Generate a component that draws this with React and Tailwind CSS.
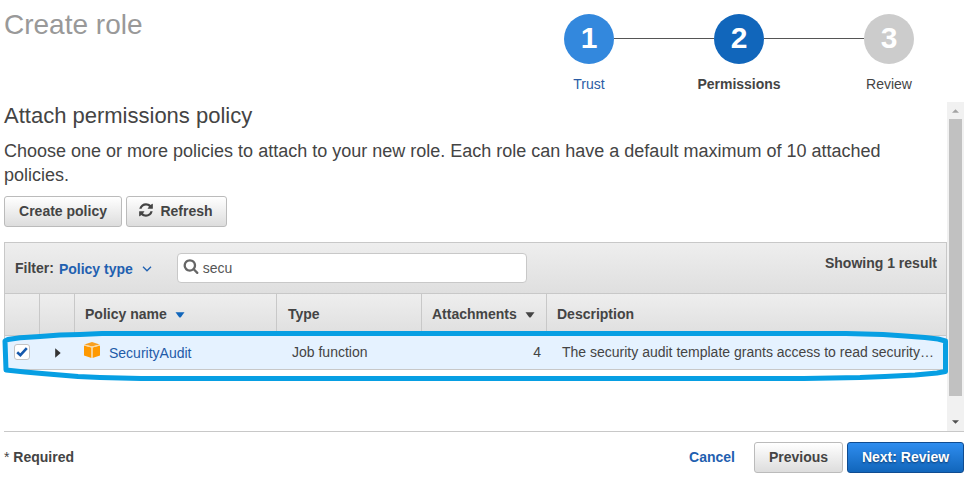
function RefreshIcon() {
  return (
    <svg viewBox="0 0 1792 1792" className="mb-px h-4 w-4 fill-[#444]">
      <path d="M1639 1056q0 5-1 7-64 268-268 434.5t-478 166.5q-146 0-282.5-55t-243.5-157l-129 129q-19 19-45 19t-45-19-19-45v-448q0-26 19-45t45-19h448q26 0 45 19t19 45-19 45l-137 137q71 66 161 102t187 36q134 0 250-65t186-179q11-17 53-117 8-23 30-23h192q13 0 22.5 9.5t9.5 22.5zm25-800v448q0 26-19 45t-45 19h-448q-26 0-45-19t-19-45 19-45l138-138q-148-137-349-137-134 0-250 65t-186 179q-11 17-53 117-8 23-30 23h-199q-13 0-22.5-9.5t-9.5-22.5v-7q65-268 270-434.5t480-166.5q146 0 284 55.5t245 156.5l130-129q19-19 45-19t45 19 19 45z" />
    </svg>
  );
}

function SearchIcon() {
  return (
    <svg viewBox="0 0 1792 1792" className="h-4 w-4 fill-[#666]">
      <path d="M1216 832q0-185-131.5-316.5t-316.5-131.5-316.5 131.5-131.5 316.5 131.5 316.5 316.5 131.5 316.5-131.5 131.5-316.5zm512 832q0 52-38 90t-90 38q-54 0-90-38l-343-342q-179 124-399 124-143 0-273.5-55.5t-225-150-150-225-55.5-273.5 55.5-273.5 150-225 225-150 273.5-55.5 273.5 55.5 225 150 150 225 55.5 273.5q0 220-124 399l343 343q37 37 37 90z" />
    </svg>
  );
}

function PolicyIcon() {
  return (
    <svg viewBox="0 0 16 16" className="h-4 w-4">
      <path fill="#f90" d="M0 3.6 7.5 5.6V16L0 13.6zM16 3.6 8.5 5.6V16L16 13.6z" />
      <path fill="#f9a020" d="M.4 2.4 8 0l7.6 2.4L8 4.6z" />
      <path fill="#fdd9a0" d="M.2 2.6 8 4.6l7.8-2 .2 1-7.5 2V16h-1V5.6L0 3.6z" />
    </svg>
  );
}

function Caret({ className }) {
  return (
    <svg viewBox="0 0 10 6" className={className}>
      <path d="M.5.3h9L5.8 5.2q-.8.8-1.6 0z" />
    </svg>
  );
}

function Button({ className = "", primary, children }) {
  return (
    <button
      className={
        "flex h-[31px] items-center justify-center rounded-[3px] border pb-[2px] text-sm font-bold " +
        (primary
          ? "border-[#0f4c91] bg-linear-to-b from-[#2e8def] to-[#1166bb] text-white [text-shadow:0_1px_2px_#08376b] "
          : "border-[#bbb] bg-linear-to-b from-white to-[#ddd] text-[#444] ") +
        className
      }
    >
      {children}
    </button>
  );
}

function Step({ number, label, circle, text }) {
  return (
    <div className="flex w-[50px] flex-col items-center">
      <div className={"flex h-[50px] w-[50px] items-center justify-center rounded-full pb-px text-[30px] font-bold text-white " + circle}>
        {number}
      </div>
      <div className={"mt-[10px] text-sm leading-5 whitespace-nowrap " + text}>{label}</div>
    </div>
  );
}

function Line() {
  return <div className="mt-6 h-px w-[100px] bg-[#555]" />;
}

const columns = "grid grid-cols-[34px_35px_202px_145px_125px_1fr]";

export default function App() {
  return (
    <div className="relative flex h-[482px] w-[972px] flex-col overflow-hidden bg-white pr-2 pl-1 font-['Liberation_Sans',Arial,sans-serif] text-sm text-[#444]">
      <header className="flex h-[102px] shrink-0 justify-between pr-[50px]">
        <h1 className="mt-[7px] text-[28px] leading-9 text-[#999]">Create role</h1>
        <div className="flex items-start pt-[14px]">
          <Step number="1" label="Trust" circle="bg-[#3388dd]" text="text-[#2a5ca5]" />
          <Line />
          <Step number="2" label="Permissions" circle="bg-[#1166bb]" text="font-bold" />
          <Line />
          <Step number="3" label="Review" circle="bg-[#ccc]" text="" />
        </div>
      </header>

      <div className="flex h-[329px] shrink-0">
        <main className="w-[943px]">
          <h2 className="text-[22px] leading-7">Attach permissions policy</h2>
          <p className="mt-[9px] text-lg leading-6">
            Choose one or more policies to attach to your new role. Each role can have a default maximum of 10 attached
            <br />
            policies.
          </p>
          <div className="mt-[9px] flex gap-1">
            <Button className="w-[118px]">Create policy</Button>
            <Button className="w-[101px] gap-[6px] pr-[2px]">
              <RefreshIcon />
              Refresh
            </Button>
          </div>

          <section className="mt-[15px] border border-b-0 border-[#c8c8c8]">
            <div className="flex h-[50px] bg-linear-to-b from-[#eee] to-[#dfdfdf] pr-[9px] pl-[10px]">
              <span className="mt-[15px] font-bold leading-5">Filter:</span>
              <span className="mt-4 ml-[5px] flex h-5 items-center font-bold text-[#1f60b0]">
                Policy type
                <svg viewBox="0 0 10 6" className="ml-[9px] h-[6px] w-[10px] fill-none stroke-[#1f60b0]">
                  <path d="m1 .8 4 4 4-4" strokeWidth="1.3" />
                </svg>
              </span>
              <div className="mt-[10px] ml-[25px] flex h-[30px] w-[350px] items-center rounded border border-[#c8c8c8] bg-white pl-[5px] text-[#555]">
                <div className="mr-1 pb-1">
                  <SearchIcon />
                </div>
                secu
              </div>
              <span className="mt-[10px] ml-auto font-bold leading-5">Showing 1 result</span>
            </div>

            <div className={columns + " h-[43px] border-y border-[#c8c8c8] bg-linear-to-b from-[#eee] to-[#dfdfdf] font-bold leading-[41px]"}>
              <div />
              <div className="border-l border-[#c8c8c8]" />
              <div className="flex items-center border-l border-[#c8c8c8] pl-[10px]">
                Policy name
                <Caret className="mt-px ml-2 h-[6px] w-[10px] fill-[#1166bb]" />
              </div>
              <div className="border-l border-[#c8c8c8] pl-[11px]">Type</div>
              <div className="flex items-center border-l border-[#c8c8c8] pl-[10px]">
                Attachments
                <Caret className="mt-px ml-2 h-[6px] w-[10px] fill-[#444]" />
              </div>
              <div className="border-l border-[#c8c8c8] pl-[10px]">Description</div>
            </div>

            <div className={columns + " h-[34px] border-b border-[#c8c8c8] bg-[#e5f2ff] leading-[33px]"}>
              <div className="pt-2 pl-[9px]">
                <div className="flex h-4 w-4 items-center justify-center rounded-[3px] border border-[#c4c4c4] bg-white">
                  <svg viewBox="0 0 12 12" className="h-3 w-3 fill-none stroke-[#1659ad]">
                    <path d="m1.2 6.2 3.2 3L10.8 2.2" strokeWidth="2.6" />
                  </svg>
                </div>
              </div>
              <div className="flex items-center pl-[16px]">
                <svg viewBox="0 0 6 10" className="h-[10px] w-[6px] fill-[#333]">
                  <path d="M.2.3 5.7 5 .2 9.7z" />
                </svg>
              </div>
              <div className="flex pl-[10px] text-[#1f5ba8]">
                <div className="mt-[6px] mr-[9px]">
                  <PolicyIcon />
                </div>
                <span className="pt-px">SecurityAudit</span>
              </div>
              <div className="pl-4">Job function</div>
              <div className="pr-[5px] text-right">4</div>
              <div className="pl-4 whitespace-nowrap">The security audit template grants access to read security…</div>
            </div>
          </section>
        </main>

        <div className="flex w-[17px] flex-col items-center bg-[#f1f1f1]">
          <div className="flex h-[17px] items-center">
            <svg viewBox="0 0 8 4" className="h-1 w-[7px] fill-[#a3a3a3]">
              <path d="M0 4 4 0l4 4z" />
            </svg>
          </div>
          <div className="h-[277px] w-[13px] bg-[#c1c1c1]" />
          <div className="mt-auto flex h-[19px] items-center">
            <svg viewBox="0 0 8 4" className="h-1 w-[7px] fill-[#505050]">
              <path d="M0 0h8L4 4z" />
            </svg>
          </div>
        </div>
      </div>

      <footer className="flex shrink-0 items-center border-t border-[#c8c8c8] pt-[10px]">
        <span className="pb-[2px]">
          * <b>Required</b>
        </span>
        <span className="mr-[19px] ml-auto pb-[2px] font-bold text-[#1f60b0]">Cancel</span>
        <Button className="mr-1 w-[89px]">Previous</Button>
        <Button primary className="w-[117px]">
          Next: Review
        </Button>
      </footer>

      <svg viewBox="0 0 972 482" className="pointer-events-none absolute inset-0 h-full w-full fill-none stroke-[#079fe3]">
        <path
          strokeWidth="5"
          strokeLinejoin="round"
          d="M5 341 8 339.5 20 337.8 40 336.5 60 335 80 334.5 102 333.5H846L883 334.5 905 336 925 337.5 938 339 945.5 341V371.500L937 373 915 375 885 376.500 860 377.500 804 378.500H141L100 377.500 78 376.500 60 375 42 373.500 25 372 6 370z"
        />
      </svg>
    </div>
  );
}
